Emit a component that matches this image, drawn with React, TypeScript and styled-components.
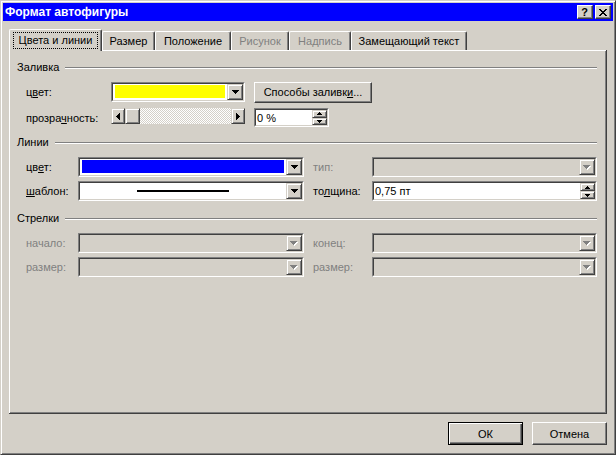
import React from 'react';
import styled, { createGlobalStyle, css } from 'styled-components';

const FACE = '#d4d0c8';

const Global = createGlobalStyle`
  html, body { margin: 0; padding: 0; background: ${FACE}; }
  body { font-family: "Liberation Sans", Arial, sans-serif; font-size: 11px; color: #000; }
  * { box-sizing: border-box; }
`;

const Window = styled.div`
  width: 616px;
  height: 455px;
  background: ${FACE};
  border: 1px solid;
  border-color: ${FACE} #404040 #404040 ${FACE};
  box-shadow: inset 1px 1px #fff, inset -1px -1px #808080;
  padding: 2px;
  display: flex;
  flex-direction: column;
`;

const TitleBar = styled.div`
  height: 18px;
  background: #0000ff;
  display: flex;
  align-items: center;
  justify-content: space-between;
  padding: 0 2px 0 2px;
`;

const Title = styled.div`
  color: #fff;
  font-weight: bold;
  font-size: 12px;
  line-height: 18px;
  white-space: nowrap;
`;

const CaptionButtons = styled.div`
  display: flex;
  gap: 2px;
`;

const CaptionButton = styled.div`
  width: 16px;
  height: 14px;
  background: ${FACE};
  border: 1px solid;
  border-color: #fff #404040 #404040 #fff;
  box-shadow: inset -1px -1px #808080;
  display: flex;
  align-items: center;
  justify-content: center;
  font-weight: bold;
  font-size: 11px;
  line-height: 12px;
  padding-right: 1px;
`;

const Body = styled.div`
  flex: 1;
  display: flex;
  flex-direction: column;
  padding: 8px 6px 0 6px;
`;

const TabStrip = styled.div`
  height: 21px;
  display: flex;
  align-items: flex-end;
`;

const Tab = styled.div<{ $w: number; $active?: boolean; $disabled?: boolean }>`
  width: ${(p) => p.$w}px;
  height: ${(p) => (p.$active ? 22 : 19)}px;
  margin-bottom: ${(p) => (p.$active ? -1 : 0)}px;
  position: relative;
  z-index: ${(p) => (p.$active ? 2 : 1)};
  flex-shrink: 0;
  background: ${FACE};
  border-top: 1px solid #fff;
  border-left: 1px solid #fff;
  border-right: 1px solid #404040;
  box-shadow: inset -1px 0 #808080;
  border-radius: 2px 2px 0 0;
  display: flex;
  align-items: ${(p) => (p.$active ? 'flex-start' : 'center')};
  padding-top: ${(p) => (p.$active ? 2 : 0)}px;
  justify-content: center;
  color: ${(p) => (p.$disabled ? '#808080' : '#000')};
  white-space: nowrap;
`;

const FocusRing = styled.span`
  display: inline-block;
  border: 1px dotted #000;
  padding: 1px 5px 1px 5px;
  line-height: 13px;
`;

const TabPanel = styled.div`
  height: 364px;
  background: ${FACE};
  box-shadow: inset -1px -1px #404040, inset 1px 1px #fff, inset -2px -2px #808080;
  padding: 11px 10px 0 8px;
  display: flex;
  flex-direction: column;
`;

const GroupHeader = styled.div<{ $mt: number }>`
  display: flex;
  align-items: center;
  height: 13px;
  margin-top: ${(p) => p.$mt}px;
  line-height: 13px;
`;

const GroupLine = styled.div`
  flex: 1;
  height: 2px;
  margin-left: 6px;
  border-top: 1px solid #808080;
  border-bottom: 1px solid #fff;
`;

const Row = styled.div<{ $h: number; $mt: number }>`
  display: flex;
  align-items: center;
  height: ${(p) => p.$h}px;
  margin-top: ${(p) => p.$mt}px;
  padding-left: 9px;
`;

const Label = styled.div<{ $w: number; $ml?: number; $disabled?: boolean }>`
  width: ${(p) => p.$w}px;
  margin-left: ${(p) => p.$ml ?? 0}px;
  flex-shrink: 0;
  white-space: nowrap;
  color: ${(p) => (p.$disabled ? '#808080' : '#000')};
`;

const U = styled.span`
  text-decoration: underline;
  text-underline-offset: 1px;
`;

const Sunken = styled.div<{ $w: number; $h: number; $mt?: number }>`
  width: ${(p) => p.$w}px;
  height: ${(p) => p.$h}px;
  margin-top: ${(p) => p.$mt ?? 0}px;
  flex-shrink: 0;
  border: 1px solid;
  border-color: #808080 #fff #fff #808080;
  display: flex;
`;

const Field = styled.div<{ $disabled?: boolean }>`
  flex: 1;
  display: flex;
  align-items: stretch;
  background: ${(p) => (p.$disabled ? FACE : '#fff')};
  border: 1px solid;
  border-color: #404040 ${FACE} ${FACE} #404040;
  min-width: 0;
`;

const Swatch = styled.div<{ $color: string }>`
  flex: 1;
  margin: 1px 2px 2px 2px;
  background: ${(p) => p.$color};
`;

const PatternCell = styled.div`
  flex: 1;
  display: flex;
  align-items: center;
  justify-content: center;
`;

const PatternLine = styled.div`
  width: 92px;
  height: 2px;
  background: #000;
`;

const FieldText = styled.div`
  flex: 1;
  display: flex;
  align-items: center;
  padding-left: 1px;
  white-space: nowrap;
`;

const raised = css`
  background: ${FACE};
  border: 1px solid;
  border-color: ${FACE} #404040 #404040 ${FACE};
  box-shadow: inset 1px 1px #fff, inset -1px -1px #808080;
  display: flex;
  align-items: center;
  justify-content: center;
`;

const DropButton = styled.div`
  ${raised};
  width: 16px;
  flex-shrink: 0;
`;

const SpinButtons = styled.div`
  width: 15px;
  flex-shrink: 0;
  display: flex;
  flex-direction: column;
`;

const SpinButton = styled.div`
  ${raised};
  flex: 1;
`;

const ScrollBar = styled.div`
  width: 134px;
  height: 16px;
  flex-shrink: 0;
  align-self: flex-start;
  margin-top: 1px;
  display: flex;
`;

const ScrollButton = styled.div`
  ${raised};
  width: 14px;
  flex-shrink: 0;
`;

const Thumb = styled.div`
  ${raised};
  width: 15px;
  flex-shrink: 0;
`;

const Track = styled.div`
  flex: 1;
  background-color: ${FACE};
  background-image: repeating-conic-gradient(#fff 0 25%, ${FACE} 0 50%);
  background-size: 2px 2px;
`;

const PushButton = styled.div<{ $w: number; $h: number; $ml?: number; $default?: boolean }>`
  width: ${(p) => p.$w}px;
  height: ${(p) => p.$h}px;
  margin-left: ${(p) => p.$ml ?? 0}px;
  flex-shrink: 0;
  background: ${FACE};
  border: 1px solid;
  border-color: #fff #404040 #404040 #fff;
  box-shadow: inset -1px -1px #808080;
  display: flex;
  align-items: center;
  justify-content: center;
  white-space: nowrap;
  ${(p) =>
    p.$default &&
    css`
      border-color: #000;
      box-shadow: inset 1px 1px #fff, inset -1px -1px #404040, inset -2px -2px #808080;
    `}
`;

const Footer = styled.div`
  display: flex;
  justify-content: flex-end;
  padding-top: 8px;
`;

type Dir = 'down' | 'up' | 'left' | 'right';
const shapes: Record<string, [number, number, number, number][]> = {
  down: [[0, 0, 7, 1], [1, 1, 5, 1], [2, 2, 3, 1], [3, 3, 1, 1]],
  left: [[3, 0, 1, 7], [2, 1, 1, 5], [1, 2, 1, 3], [0, 3, 1, 1]],
  right: [[0, 0, 1, 7], [1, 1, 1, 5], [2, 2, 1, 3], [3, 3, 1, 1]],
  up5: [[2, 0, 1, 1], [1, 1, 3, 1], [0, 2, 5, 1]],
  down5: [[0, 0, 5, 1], [1, 1, 3, 1], [2, 2, 1, 1]],
};

const Arrow: React.FC<{ kind: string; disabled?: boolean }> = ({ kind, disabled }) => {
  const rects = shapes[kind];
  const w = Math.max(...rects.map((r) => r[0] + r[2]));
  const h = Math.max(...rects.map((r) => r[1] + r[3]));
  return (
    <svg width={w + (disabled ? 1 : 0)} height={h + (disabled ? 1 : 0)} shapeRendering="crispEdges" style={{ display: 'block' }}>
      {disabled && rects.map((r, i) => <rect key={'s' + i} x={r[0] + 1} y={r[1] + 1} width={r[2]} height={r[3]} fill="#fff" />)}
      {rects.map((r, i) => (
        <rect key={i} x={r[0]} y={r[1]} width={r[2]} height={r[3]} fill={disabled ? '#808080' : '#000'} />
      ))}
    </svg>
  );
};

const CloseGlyph = () => {
  const rows: [number, number][][] = [
    [[0, 2], [6, 2]],
    [[1, 2], [5, 2]],
    [[2, 4]],
    [[3, 2]],
    [[2, 4]],
    [[1, 2], [5, 2]],
    [[0, 2], [6, 2]],
  ];
  return (
    <svg width={8} height={7} shapeRendering="crispEdges" style={{ display: 'block' }}>
      {rows.map((segs, y) => segs.map(([x, w], i) => <rect key={y + '-' + i} x={x} y={y} width={w} height={1} fill="#000" />))}
    </svg>
  );
};

const Combo: React.FC<{ w: number; h?: number; disabled?: boolean; children?: React.ReactNode }> = ({ w, h = 20, disabled, children }) => (
  <Sunken $w={w} $h={h}>
    <Field $disabled={disabled}>
      {children ?? <PatternCell />}
      <DropButton>
        <Arrow kind="down" disabled={disabled} />
      </DropButton>
    </Field>
  </Sunken>
);

const Spin: React.FC<{ w: number; h: number; value: string }> = ({ w, h, value }) => (
  <Sunken $w={w} $h={h}>
    <Field>
      <FieldText>{value}</FieldText>
      <SpinButtons>
        <SpinButton>
          <Arrow kind="up5" />
        </SpinButton>
        <SpinButton>
          <Arrow kind="down5" />
        </SpinButton>
      </SpinButtons>
    </Field>
  </Sunken>
);

export default function App() {
  return (
    <>
      <Global />
      <Window>
        <TitleBar>
          <Title>Формат автофигуры</Title>
          <CaptionButtons>
            <CaptionButton>?</CaptionButton>
            <CaptionButton>
              <CloseGlyph />
            </CaptionButton>
          </CaptionButtons>
        </TitleBar>
        <Body>
          <TabStrip>
            <Tab $w={93} $active>
              <FocusRing>Цвета и линии</FocusRing>
            </Tab>
            <Tab $w={53}>Размер</Tab>
            <Tab $w={76}>Положение</Tab>
            <Tab $w={58} $disabled>Рисунок</Tab>
            <Tab $w={62} $disabled>Надпись</Tab>
            <Tab $w={116}>Замещающий текст</Tab>
          </TabStrip>
          <TabPanel>
            <GroupHeader $mt={0}>
              Заливка
              <GroupLine />
            </GroupHeader>
            <Row $h={22} $mt={7}>
              <Label $w={85}>
                ц<U>в</U>ет:
              </Label>
              <Combo w={134}>
                <Swatch $color="#ffff00" />
              </Combo>
              <PushButton $w={118} $h={21} $ml={9}>
                Способы заливк<U>и</U>...
              </PushButton>
            </Row>
            <Row $h={21} $mt={4}>
              <Label $w={85}>
                прозра<U>ч</U>ность:
              </Label>
              <ScrollBar>
                <ScrollButton>
                  <Arrow kind="left" />
                </ScrollButton>
                <Thumb />
                <Track />
                <ScrollButton>
                  <Arrow kind="right" />
                </ScrollButton>
              </ScrollBar>
              <div style={{ width: 9 }} />
              <Spin w={75} h={19} value="0 %" />
            </Row>

            <GroupHeader $mt={8}>
              Линии
              <GroupLine />
            </GroupHeader>
            <Row $h={20} $mt={8}>
              <Label $w={52}>
                цв<U>е</U>т:
              </Label>
              <Combo w={226}>
                <Swatch $color="#0000ff" />
              </Combo>
              <Label $w={59} $ml={9} $disabled>
                тип:
              </Label>
              <Combo w={225} disabled />
            </Row>
            <Row $h={20} $mt={4}>
              <Label $w={52}>
                <U>ш</U>аблон:
              </Label>
              <Combo w={226}>
                <PatternCell>
                  <PatternLine />
                </PatternCell>
              </Combo>
              <Label $w={59} $ml={9}>
                то<U>л</U>щина:
              </Label>
              <Spin w={225} h={20} value="0,75 пт" />
            </Row>

            <GroupHeader $mt={11}>
              Стрелки
              <GroupLine />
            </GroupHeader>
            <Row $h={20} $mt={8}>
              <Label $w={52} $disabled>
                начало:
              </Label>
              <Combo w={226} disabled />
              <Label $w={59} $ml={9} $disabled>
                конец:
              </Label>
              <Combo w={225} disabled />
            </Row>
            <Row $h={20} $mt={4}>
              <Label $w={52} $disabled>
                размер:
              </Label>
              <Combo w={226} disabled />
              <Label $w={59} $ml={9} $disabled>
                размер:
              </Label>
              <Combo w={225} disabled />
            </Row>
          </TabPanel>
          <Footer>
            <PushButton $w={75} $h={23} $default>
              ОК
            </PushButton>
            <PushButton $w={75} $h={23} $ml={9}>
              Отмена
            </PushButton>
          </Footer>
        </Body>
      </Window>
    </>
  );
}
